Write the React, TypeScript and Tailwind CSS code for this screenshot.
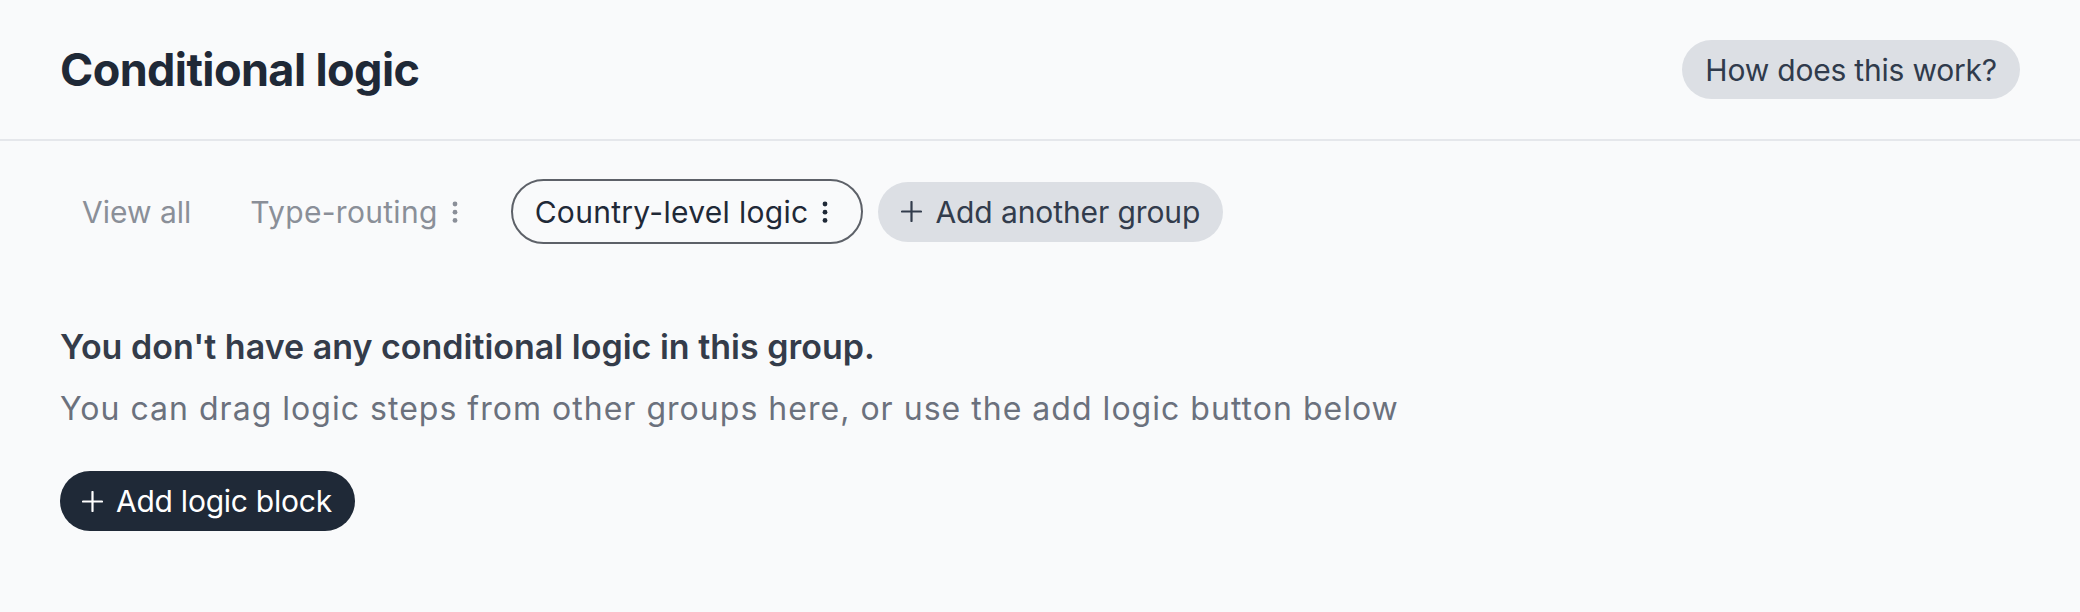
import React from 'react';

// ─── Иконки ─────────────────────────────
function DotsIcon() {
	return (
		<svg width="24" height="28" viewBox="0 0 24 28" className="shrink-0" aria-hidden>
			<circle cx="12" cy="6" r="2.4" fill="currentColor" />
			<circle cx="12" cy="14.2" r="2.4" fill="currentColor" />
			<circle cx="12" cy="22.4" r="2.4" fill="currentColor" />
		</svg>
	);
}

function PlusIcon() {
	return (
		<svg width="21" height="21" viewBox="0 0 21 21" className="shrink-0" aria-hidden>
			<path d="M10.5 1v19M1 10.5h19" stroke="currentColor" strokeWidth="2.2" strokeLinecap="round" />
		</svg>
	);
}

// ─── Вкладки групп ──────────────────────
type Tab = { label: string; menu?: boolean };

const TABS: Tab[] = [
	{ label: 'View all' },
	{ label: 'Type-routing', menu: true },
	{ label: 'Country-level logic', menu: true },
];

function GroupTab({ tab, active }: { tab: Tab; active: boolean }) {
	return (
		<button
			className={
				active
					? 'flex items-center h-[65px] pl-[22px] pr-[30px] rounded-full border-2 border-[#5d6168] text-[#1f2937]'
					: tab.menu
						? 'flex items-center h-[65px] pl-[20px] pr-[33px] rounded-full border-2 border-transparent text-[#8a8f98]'
						: 'flex items-center h-[65px] px-[20px] rounded-full border-2 border-transparent text-[#8a8f98]'
			}
		>
			<span className={tab.menu ? 'text-[30px] leading-none tracking-[0.3px]' : 'text-[30px] leading-none'}>
				{tab.label}
			</span>
			{tab.menu && (
				<span className="ml-[5px] -mr-[6px]">
					<DotsIcon />
				</span>
			)}
		</button>
	);
}

// ─── Главный компонент ──────────────────
export default function App() {
	return (
		<div className="min-h-screen w-full bg-[#f9fafb] font-['Inter',sans-serif]">
			<header className="h-[141px] flex items-center justify-between px-[60px] border-b-2 border-[#e5e7eb]">
				<h1 className="text-[45px] leading-[1.2] font-bold text-[#1f2937] tracking-[-0.6px]">
					Conditional logic
				</h1>
				<button className="h-[59px] px-[23px] rounded-full bg-[#dcdfe4] text-[30px] leading-none tracking-[-0.2px] text-[#303b4c]">
					How does this work?
				</button>
			</header>

			<div className="px-[60px]">
				<div className="mt-[38px] flex items-center gap-[15px]">
					{TABS.map((tab, i) => (
						<GroupTab key={tab.label} tab={tab} active={i === 2} />
					))}
					<button className="flex items-center gap-[13px] h-[60px] px-[23px] rounded-full bg-[#dcdfe4] text-[#323c4c]">
						<PlusIcon />
						<span className="text-[30px] leading-none tracking-[-0.1px]">Add another group</span>
					</button>
				</div>

				<h2 className="mt-[82px] text-[34px] leading-[41px] font-semibold text-[#343c4a]">
					You don't have any conditional logic in this group.
				</h2>
				<p className="mt-[22px] text-[32px] leading-[40px] tracking-[1.02px] text-[#6b717d]">
					You can drag logic steps from other groups here, or use the add logic button below
				</p>

				<button className="mt-[42px] flex items-center gap-[13px] h-[60px] pl-[22px] pr-[23px] rounded-full bg-[#1f2937] text-white">
					<PlusIcon />
					<span className="text-[30px] leading-none tracking-[-0.25px]">Add logic block</span>
				</button>
			</div>
		</div>
	);
}
